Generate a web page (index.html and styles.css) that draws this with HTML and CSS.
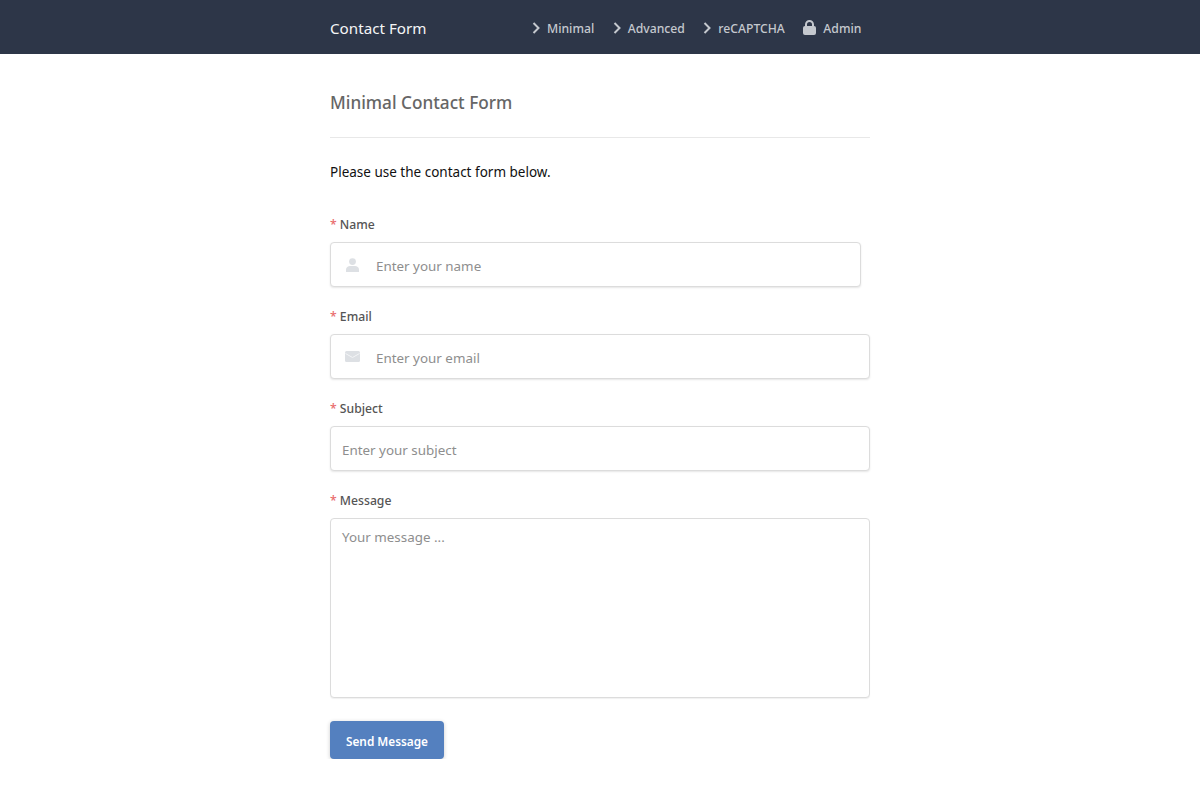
FILE: index.html
```html
<!DOCTYPE html>
<html lang="en">
<head>
  <meta charset="UTF-8">
  <meta name="viewport" content="width=device-width, initial-scale=1.0">
  <title>Contact Form</title>
  <link rel="stylesheet" href="styles.css">
</head>
<body>
  <header class="navbar">
    <div class="navbar-inner">
      <a class="brand" href="#">Contact Form</a>
      <nav class="nav">
        <a class="nav-link" href="#">
          <svg class="nav-icon" width="8" height="12" viewBox="0 0 8 12"><path d="M1.500 1l5 5-5 5" fill="none" stroke="currentColor" stroke-width="2"/></svg>
          Minimal
        </a>
        <a class="nav-link" href="#">
          <svg class="nav-icon" width="8" height="12" viewBox="0 0 8 12"><path d="M1.500 1l5 5-5 5" fill="none" stroke="currentColor" stroke-width="2"/></svg>
          Advanced
        </a>
        <a class="nav-link" href="#">
          <svg class="nav-icon" width="8" height="12" viewBox="0 0 8 12"><path d="M1.500 1l5 5-5 5" fill="none" stroke="currentColor" stroke-width="2"/></svg>
          reCAPTCHA
        </a>
        <a class="nav-link" href="#">
          <svg class="nav-icon" width="13" height="15" viewBox="0 0 13 15"><path d="M3 7V4.500a3.500 3.500 0 0 1 7 0V7" fill="none" stroke="currentColor" stroke-width="2"/><rect y="6" width="13" height="9" rx="2" fill="currentColor"/></svg>
          Admin
        </a>
      </nav>
    </div>
  </header>

  <main class="container">
    <h1 class="title">Minimal Contact Form</h1>
    <p class="intro">Please use the contact form below.</p>

    <form>
      <div class="field">
        <label class="label" for="name"><span class="required">*</span> Name</label>
        <div class="control control-name">
          <svg class="control-icon icon-user" width="13" height="14" viewBox="0 0 13 14"><circle cx="6.500" cy="3.600" r="3.400" fill="currentColor"/><path d="M0 14v-2.500C0 9.200 2 8 4 8h5c2 0 4 1.200 4 3.500V14z" fill="currentColor"/></svg>
          <input class="input input-icon" id="name" type="text" placeholder="Enter your name">
        </div>
      </div>
      <div class="field">
        <label class="label" for="email"><span class="required">*</span> Email</label>
        <div class="control">
          <svg class="control-icon icon-mail" width="15" height="11" viewBox="0 0 15 11"><rect width="15" height="11" rx="1.500" fill="currentColor"/><path d="M0.500 2.500l7 4 7-4" fill="none" stroke="#f4f5f7" stroke-width="1"/></svg>
          <input class="input input-icon" id="email" type="email" placeholder="Enter your email">
        </div>
      </div>
      <div class="field">
        <label class="label" for="subject"><span class="required">*</span> Subject</label>
        <div class="control">
          <input class="input" id="subject" type="text" placeholder="Enter your subject">
        </div>
      </div>
      <div class="field">
        <label class="label" for="message"><span class="required">*</span> Message</label>
        <textarea class="textarea" id="message" placeholder="Your message ..."></textarea>
      </div>
      <button class="button" type="button">Send Message</button>
    </form>
  </main>
</body>
</html>
```

FILE: styles.css
```css
body {
  margin: 0;
  background: #fff;
  font-family: "Noto Sans", sans-serif;
  font-size: 13.4px;
  color: #4a4a4a;
}
a {
  text-decoration: none;
}
.navbar {
  background: #2d3648;
  height: 54px;
}
.navbar-inner {
  width: 540px;
  height: 53px;
  padding-top: 1px;
  margin: 0 auto;
  display: flex;
  align-items: center;
}
.brand {
  color: #f4f5f6;
  font-size: 15.2px;
  width: 202px;
}
.nav {
  display: flex;
  align-items: center;
  gap: 18.5px;
}
.nav-link {
  display: flex;
  align-items: center;
  gap: 7px;
  color: #c4c8ce;
  font-size: 12.2px;
  line-height: 18px;
  padding-top: 3px;
  font-weight: 500;
}
.nav-icon {
  margin-top: -3px;
}
.container {
  width: 540px;
  margin: 0 auto;
}
.title {
  margin: 0;
  padding: 36px 0 21px;
  border-bottom: 1px solid #e8e8e8;
  font-size: 17.2px;
  line-height: 26px;
  font-weight: 500;
  color: #666;
}
.intro {
  margin: 0;
  padding: 24px 0 32px;
  font-size: 13.5px;
  line-height: 20px;
  color: #111;
}
.field {
  margin-bottom: 19px;
}
.label {
  display: block;
  padding-top: 1px;
  margin-bottom: 8px;
  font-size: 12.2px;
  line-height: 19px;
  font-weight: 500;
  color: #555;
}
.required {
  color: #e96a6a;
}
.control {
  position: relative;
}
.control-name {
  width: 531px;
}
.control-icon {
  position: absolute;
  color: #dde0e4;
}
.icon-user {
  left: 16px;
  top: 16px;
}
.icon-mail {
  left: 15px;
  top: 17px;
}
.input, .textarea {
  display: block;
  width: 100%;
  box-sizing: border-box;
  border: 1px solid #dcdcdc;
  border-radius: 4px;
  box-shadow: 0 1px 2px rgba(0, 0, 0, 0.1);
  padding: 0 11px;
  font-family: inherit;
  font-size: 13.4px;
  color: #333;
  outline: none;
}
.input {
  height: 45px;
  padding-top: 2px;
}
.input-icon {
  padding-left: 45px;
}
.textarea {
  height: 180px;
  padding-top: 8px;
  line-height: 20px;
  resize: none;
  box-shadow: 0 1px 1px rgba(0, 0, 0, 0.06);
}
::placeholder {
  color: #8e8e8e;
  opacity: 1;
}
.button {
  display: block;
  width: 114px;
  height: 38px;
  padding-top: 2px;
  margin-top: 23px;
  background: #5480bf;
  color: #fff;
  border: none;
  border-radius: 4px;
  box-shadow: 0 1px 4px rgba(0, 0, 0, 0.2);
  font-family: inherit;
  font-size: 11.8px;
  font-weight: 600;
  cursor: pointer;
}
```
